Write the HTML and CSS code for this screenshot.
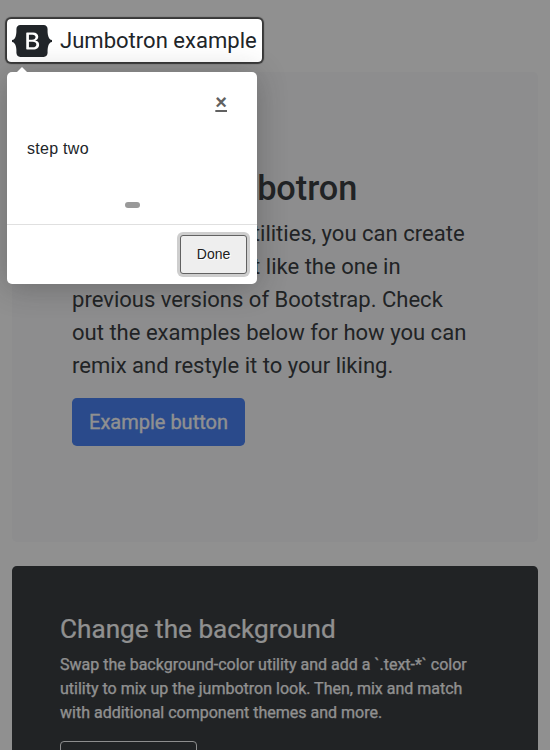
FILE: index.html
```html
<!DOCTYPE html>
<html lang="en">
<head>
<meta charset="utf-8">
<title>Jumbotron example</title>
<link rel="stylesheet" href="styles.css">
</head>
<body>
<main class="container">
  <header class="header">
    <a class="brand">
      <svg width="40" height="32" viewBox="0 0 118 94" role="img" aria-label="Bootstrap"><path fill="currentColor" fill-rule="evenodd" clip-rule="evenodd" d="M24.509 0c-6.733 0-11.715 5.893-11.492 12.284.214 6.14-.064 14.092-2.066 20.577C8.943 39.365 5.547 43.485 0 44.014v5.972c5.547.529 8.943 4.649 10.951 11.153 2.002 6.485 2.28 14.437 2.066 20.577C12.794 88.106 17.776 94 24.51 94H93.5c6.733 0 11.714-5.893 11.491-12.284-.214-6.14.064-14.092 2.066-20.577 2.009-6.504 5.396-10.624 10.943-11.153v-5.972c-5.547-.529-8.934-4.649-10.943-11.153-2.002-6.484-2.28-14.437-2.066-20.577C105.214 5.894 100.233 0 93.5 0H24.508zM80 57.863C80 66.663 73.436 72 62.543 72H44a2 2 0 01-2-2V24a2 2 0 012-2h18.437c9.083 0 15.044 4.92 15.044 12.474 0 5.302-4.01 10.049-9.119 10.88v.277C75.317 46.394 80 51.21 80 57.863zM60.521 28.34H49.948v14.934h8.905c6.884 0 10.68-2.772 10.68-7.727 0-4.643-3.264-7.207-9.012-7.207zM49.948 49.2v16.458H60.91c7.167 0 10.964-2.876 10.964-8.281 0-5.406-3.903-8.178-11.425-8.178H49.948z"/></svg>
      <span class="brand-text">Jumbotron example</span>
    </a>
  </header>
  <section class="jumbo">
    <h1>Custom jumbotron</h1>
    <p>Using a series of utilities, you can create this jumbotron, just like the one in previous versions of Bootstrap. Check out the examples below for how you can remix and restyle it to your liking.</p>
    <button class="btn-primary" type="button">Example button</button>
  </section>
  <section class="dark">
    <h2>Change the background</h2>
    <p>Swap the background-color utility and add a `.text-*` color utility to mix up the jumbotron look. Then, mix and match with additional component themes and more.</p>
    <button class="btn-outline" type="button"></button>
  </section>
</main>
<div class="highlight"></div>
<div class="tooltip" role="dialog">
  <div class="arrow"></div>
  <div class="tip-header"><a class="close">×</a></div>
  <div class="tip-text">step two</div>
  <div class="bullets"><span class="bullet"></span></div>
  <div class="tip-footer"><button class="done" type="button">Done</button></div>
</div>
</body>
</html>
```
FILE: styles.css
```css
* { box-sizing: border-box; }
body {
  margin: 0;
  height: 750px;
  overflow: hidden;
  position: relative;
  background: #fff;
  color: #212529;
  font: 400 16px/1.5 Roboto, sans-serif;
}
h1, h2, p { margin: 0; }
.container { height: 750px; padding: 24px 12px 0; overflow: hidden; }
.header { height: 48px; }
.brand { display: flex; align-items: center; height: 34px; }
.brand svg { display: block; margin-right: 8px; }
.brand-text { font-size: 22.05px; line-height: 32px; white-space: nowrap; }
.jumbo {
  height: 470px;
  margin-bottom: 24px;
  padding: 96px 60px;
  background: #f8f9fa;
  border-radius: 4.8px;
}
.jumbo h1 { margin-bottom: 8px; font-size: 34.35px; line-height: 41px; font-weight: 500; letter-spacing: -.06px; }
.jumbo p { width: 400px; margin-bottom: 16px; font-size: 22.05px; line-height: 33px; }
.btn-primary {
  display: block;
  width: 173px;
  height: 48px;
  padding: 0;
  border: 0;
  border-radius: 4.8px;
  background: #3273f5;
  color: #fff;
  font: 400 20px/30px Roboto, sans-serif;
  -webkit-text-stroke: .3px currentColor;
}
.dark {
  height: 184px;
  padding: 48px 48px 0;
  background: #212529;
  border-radius: 4.8px 4.8px 0 0;
  color: #fff;
}
.dark h2 { margin-bottom: 8px; font-size: 26.15px; line-height: 31px; font-weight: 400; -webkit-text-stroke: .2px currentColor; }
.dark p { width: 430px; margin-bottom: 16px; -webkit-text-stroke: .25px currentColor; }
.btn-outline {
  display: block;
  width: 137px;
  height: 38px;
  border: 1px solid #f8f9fa;
  border-radius: 4px;
  background: transparent;
}
.highlight {
  position: absolute;
  left: 7px;
  top: 19px;
  width: 255px;
  height: 43px;
  border-radius: 4px;
  box-shadow: 0 0 1px 2px rgba(33, 33, 33, .8), 0 0 0 5000px rgba(33, 33, 33, .5);
}
.tooltip {
  position: absolute;
  left: 7px;
  top: 72px;
  width: 250px;
  height: 212px;
  background: #fff;
  border-radius: 5px;
  box-shadow: 0 3px 30px rgba(33, 33, 33, .3);
  font-family: "Liberation Sans", sans-serif;
}
.arrow {
  position: absolute;
  left: 10px;
  top: -10px;
  border: 5px solid transparent;
  border-bottom-color: #fff;
}
.tip-header { display: flex; justify-content: flex-end; height: 56px; padding: 15px 30px 0 0; }
.close {
  color: #616161;
  font-size: 20px;
  line-height: 30px;
  font-weight: 700;
  text-decoration: underline;
  text-decoration-thickness: 2px;
  text-underline-offset: 1px;
}
.tip-text { height: 74px; padding: 9px 20px; line-height: 24px; letter-spacing: .28px; }
.bullets { display: flex; justify-content: center; height: 22px; }
.bullet { width: 15px; height: 6px; border-radius: 10px; background: #999; }
.tip-footer { display: flex; justify-content: flex-end; padding: 10px; border-top: 1px solid #e0e0e0; }
.done {
  width: 67px;
  height: 39px;
  padding: 0 0 2px;
  border: 1px solid #616161;
  border-radius: 3px;
  background: #eee;
  box-shadow: 0 0 0 3px rgba(158, 158, 158, .5);
  color: #212121;
  font: 400 14px/1 "Liberation Sans", sans-serif;
  text-shadow: 1px 1px 0 #fff;
}
```
